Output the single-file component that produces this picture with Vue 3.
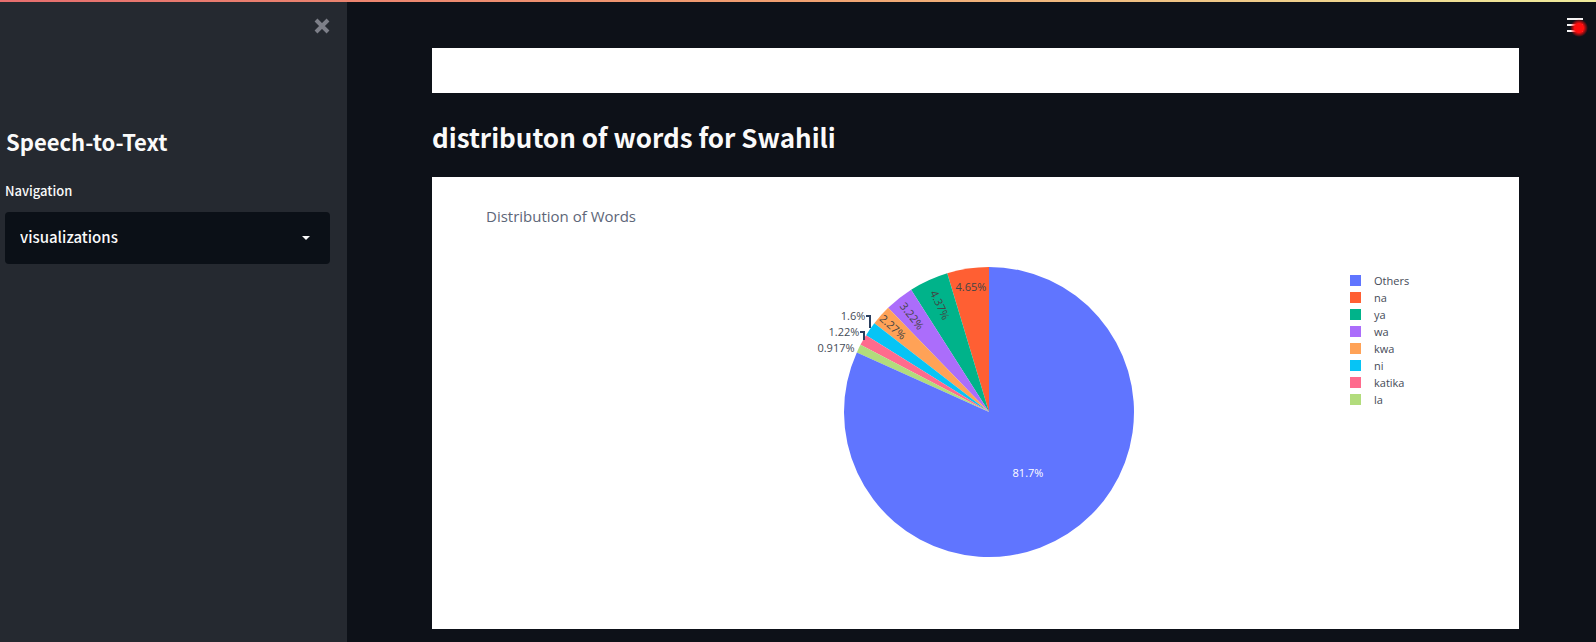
<script setup>
import { ref } from 'vue'

const page = ref('visualizations')
const pages = ['visualizations']

const words = [
  { name: 'Others', value: 81.7, color: '#6075ff' },
  { name: 'na', value: 4.65, color: '#ff5f33' },
  { name: 'ya', value: 4.37, color: '#00b38a' },
  { name: 'wa', value: 3.22, color: '#ab6dfb' },
  { name: 'kwa', value: 2.27, color: '#ffa257' },
  { name: 'ni', value: 1.6, color: '#06c4f5' },
  { name: 'katika', value: 1.22, color: '#ff6b8d' },
  { name: 'la', value: 0.917, color: '#b2dc7c' },
]

const cx = 180
const cy = 150
const r = 145
const total = words.reduce((sum, w) => sum + w.value, 0)
const at = (share) => {
  const a = share * 2 * Math.PI
  return `${(cx - r * Math.sin(a)).toFixed(2)} ${(cy - r * Math.cos(a)).toFixed(2)}`
}

// Slices run counter-clockwise from twelve o'clock; the largest closes the circle.
let start = 0
const slices = [...words.slice(1), words[0]].map((w) => {
  const end = start + w.value / total
  const large = end - start > 0.5 ? 1 : 0
  const d = `M${cx} ${cy}L${at(start)}A${r} ${r} 0 ${large} 0 ${at(end)}Z`
  start = end
  return { ...w, d }
})

const labels = [
  { text: '81.7%', x: 219, y: 211, rotate: 0, kind: 'light' },
  { text: '4.65%', x: 162, y: 25, rotate: 0, kind: 'dark' },
  { text: '4.37%', x: 131, y: 43, rotate: 65, kind: 'dark' },
  { text: '3.22%', x: 103, y: 54, rotate: 52, kind: 'dark' },
  { text: '2.27%', x: 84, y: 65, rotate: 42, kind: 'dark' },
  { text: '1.6%', x: 44, y: 54, rotate: 0, kind: 'outer' },
  { text: '1.22%', x: 35, y: 70, rotate: 0, kind: 'outer' },
  { text: '0.917%', x: 27, y: 86, rotate: 0, kind: 'outer' },
]
</script>

<template>
  <div class="app">
    <div class="decoration"></div>
    <aside class="sidebar">
      <div class="sidebar-top">
        <button class="close" type="button" aria-label="Close sidebar">
          <svg width="16" height="16" viewBox="0 0 16 16">
            <path d="M2 2L14 14M14 2L2 14" stroke="#7d7f88" stroke-width="4" />
          </svg>
        </button>
      </div>
      <h1>Speech-to-Text</h1>
      <label for="nav">Navigation</label>
      <div class="select-box">
        <select id="nav" v-model="page">
          <option v-for="p in pages" :key="p" :value="p">{{ p }}</option>
        </select>
        <svg class="caret" width="8" height="4" viewBox="0 0 8 4"><path d="M0 0H8L4 4Z" fill="#fafafa" /></svg>
      </div>
    </aside>

    <main>
      <button class="menu" type="button" aria-label="Menu">
        <svg width="26" height="26" viewBox="0 0 26 26">
          <defs>
            <radialGradient id="dot">
              <stop offset="0.5" stop-color="#ff0d0d" />
              <stop offset="1" stop-color="#ff0d0d" stop-opacity="0" />
            </radialGradient>
          </defs>
          <path d="M3 7H19M3 13H19M3 19H19" stroke="#f4f4f4" stroke-width="2" />
          <circle cx="15" cy="16" r="9" fill="url(#dot)" />
        </svg>
      </button>
      <section class="card previous"></section>
      <h2>distributon of words for Swahili</h2>
      <section class="card chart">
        <h3>Distribution of Words</h3>
        <svg class="pie" width="360" height="300" viewBox="0 0 360 300" role="img" aria-label="Distribution of Words">
          <path v-for="s in slices" :key="s.name" :d="s.d" :fill="s.color" />
          <path d="M57 54H61V66M51 70H55V78" fill="none" stroke="#2a3f5f" stroke-width="2" />
          <text
            v-for="l in labels"
            :key="l.text"
            :class="l.kind"
            :transform="`translate(${l.x} ${l.y}) rotate(${l.rotate})`"
            dy="4"
          >{{ l.text }}</text>
        </svg>
        <ul class="legend">
          <li v-for="w in words" :key="w.name">
            <span class="swatch" :style="{ background: w.color }"></span>{{ w.name }}
          </li>
        </ul>
      </section>
    </main>
  </div>
</template>

<style>
body {
  margin: 0;
  background: #0d1118;
}
</style>

<style scoped>
.app {
  position: relative;
  display: grid;
  grid-template-columns: 347px minmax(0, 1fr);
  min-height: 100vh;
  color: #fafafa;
  font-family: "Noto Sans CJK SC", "Noto Sans", sans-serif;
}
.decoration {
  position: absolute;
  top: 0;
  left: 0;
  right: 0;
  height: 2px;
  background: linear-gradient(90deg, #e76e6e, #f0a070 50%, #eeec9c);
}
.sidebar {
  box-sizing: border-box;
  padding: 16px 17px 0 5px;
  background: #252930;
}
.sidebar-top {
  display: flex;
  justify-content: flex-end;
  height: 107px;
}
button {
  padding: 0;
  border: 0;
  background: none;
}
.close {
  width: 16px;
  height: 20px;
}
.close svg,
.menu svg,
.pie {
  display: block;
}
h1,
h2,
h3 {
  margin: 0;
}
h1 {
  padding-left: 1px;
  font-size: 22px;
  line-height: 36px;
}
label {
  display: block;
  margin-top: 20px;
  font-size: 13px;
  font-weight: 500;
  line-height: 24px;
}
.select-box {
  position: relative;
  margin-top: 9px;
}
select {
  display: block;
  width: 100%;
  height: 52px;
  padding: 0 32px 4px 15px;
  appearance: none;
  border: 0;
  border-radius: 4px;
  background: #0b1017;
  color: #fafafa;
  font: inherit;
  font-size: 15px;
  font-weight: 500;
}
.caret {
  position: absolute;
  top: 24px;
  right: 20px;
  pointer-events: none;
}
main {
  position: relative;
  padding: 48px 77px 13px 85px;
}
.menu {
  position: absolute;
  top: 12px;
  right: 6px;
}
.card {
  background: #fff;
}
.previous {
  height: 45px;
}
h2 {
  padding: 24px 0 20px;
  font-size: 26px;
  line-height: 40px;
}
.chart {
  display: grid;
  grid-template-columns: minmax(0, 1fr) 360px minmax(0, 1fr);
  grid-template-rows: auto auto;
  padding: 27px 27px 67px 54px;
  color: #2a3f5f;
  font-family: "Open Sans", sans-serif;
}
h3 {
  grid-column: 1 / -1;
  margin-bottom: 34px;
  color: #5d6678;
  font-size: 15px;
  font-weight: 400;
  line-height: 24px;
}
.pie {
  grid-column: 2;
}
.pie text {
  font-size: 11px;
  text-anchor: middle;
}
.light {
  fill: #fff;
}
.dark {
  fill: #444;
}
.outer {
  fill: #444b57;
}
.legend {
  justify-self: end;
  width: 142px;
  margin: 10px 0 0;
  padding: 0;
  list-style: none;
  color: #454b57;
  font-size: 11px;
  line-height: 17px;
}
.legend li {
  display: flex;
  align-items: center;
  gap: 13px;
}
.swatch {
  width: 11px;
  height: 11px;
}
</style>
